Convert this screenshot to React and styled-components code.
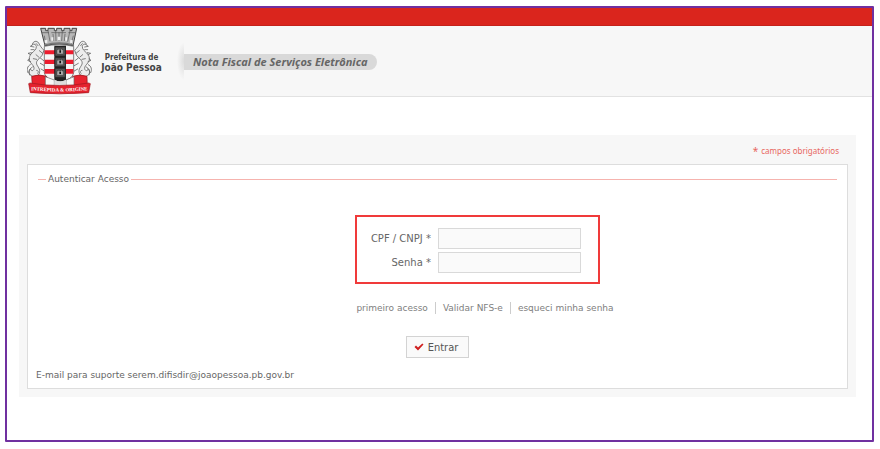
import styled, { createGlobalStyle } from 'styled-components';

const GlobalStyle = createGlobalStyle`
  * {
    box-sizing: border-box;
  }

  body {
    margin: 0;
    background: #fff;
    font-family: 'DejaVu Sans', Verdana, sans-serif;
    font-size: 9px;
    line-height: 12px;
    color: #666;
  }
`;

const Page = styled.div`
  min-height: calc(100vh - 13px);
  margin: 6px 6px 7px 5px;
  border: 2px solid #7030a0;
  border-radius: 1px;
`;

const TopBar = styled.div`
  height: 18px;
  background: #da251d;
  border-bottom: 1px solid #c4221b;
`;

const Header = styled.header`
  display: flex;
  align-items: center;
  height: 71px;
  padding-left: 20px;
  background: #f7f7f7;
  border-bottom: 1px solid #e2e2e2;
`;

const CityName = styled.div`
  width: 63px;
  margin-left: 7px;
  padding-top: 6px;
  font-family: 'DejaVu Sans Condensed', 'DejaVu Sans', sans-serif;
  font-weight: 700;
  font-size: 10px;
  line-height: 12px;
  text-align: center;
  white-space: nowrap;
  color: #444;
`;

const CityPrefix = styled.span`
  display: block;
  font-size: 8px;
  line-height: 8px;
`;

const TitleWrap = styled.div`
  display: flex;
  align-items: center;
  height: 38px;
  margin-left: 14px;
  padding: 2px 0 0 7px;
  background: radial-gradient(ellipse 7px 19px at 7px 50%, #dcdcdc, #f7f7f7) no-repeat 0 0 / 7px 38px;
`;

const Title = styled.h1`
  margin: 0;
  padding: 0 10px 0 9px;
  border-radius: 0 8px 8px 0;
  background: #d9d9d9;
  font-family: 'Noto Sans', sans-serif;
  font-style: italic;
  font-weight: 700;
  font-size: 11px;
  line-height: 16px;
  color: #666;
`;

const Panel = styled.main`
  margin: 38px 16px 43px 12px;
  padding: 9px 8px 8px;
  background: #f7f7f7;
`;

const Required = styled.p`
  display: flex;
  justify-content: flex-end;
  gap: 3px;
  margin: 0;
  padding: 1px 9px 7px 0;
  font-family: 'Noto Sans', sans-serif;
  font-size: 8px;
  color: #e8675f;
`;

const Star = styled.span`
  font-size: 10px;
`;

const Card = styled.div`
  padding: 8px 10px 7px 8px;
  border: 1px solid #ddd;
  background: #fff;
`;

const Fieldset = styled.fieldset`
  min-width: 0;
  margin: 0 0 0 2px;
  padding: 30px 0 11px;
  border: none;
  border-top: 1px solid #f6b3ae;
`;

const Legend = styled.legend`
  margin-left: 8px;
  padding: 0 2px;
`;

const Fields = styled.div`
  display: grid;
  grid-template-columns: 1fr 143px;
  align-items: center;
  gap: 3px 7px;
  width: 245px;
  padding: 11px 17px 9px 11px;
  border: 2px solid #f03a3a;
`;

const Row = styled.div`
  display: flex;
  justify-content: center;
  padding-left: ${({ $shift }) => $shift || 0}px;
  margin-bottom: ${({ $gap }) => $gap || 0}px;
`;

const Label = styled.label`
  font-size: 10px;
  text-align: right;
  white-space: nowrap;
`;

const Input = styled.input`
  width: 100%;
  height: 21px;
  padding: 0 4px;
  border: 1px solid #d9d9d9;
  background: #fafafa;
  font: inherit;
  color: inherit;
`;

const Link = styled.a`
  padding: 0 7px;
  color: #808080;
  text-decoration: none;

  & + & {
    border-left: 1px solid #ccc;
  }
`;

const Button = styled.button`
  display: flex;
  align-items: center;
  gap: 4px;
  height: 22px;
  padding: 0 10px 0 7px;
  border: 1px solid #d3d3d3;
  background: #fafafa;
  font-family: 'DejaVu Sans Condensed', 'DejaVu Sans', sans-serif;
  font-size: 11px;
  color: #555;
`;

const Support = styled.p`
  margin: 0;
`;

const Tower = ({ y }) => (
  <g>
    <path d={`M105 ${y}h31v27h-31z`} fill="#555" stroke="#222" strokeWidth="2" />
    <path d={`M111 ${y + 21}v-13h4v-3h3v3h5v-3h3v3h4v13z`} fill="#aaa" stroke="#222" strokeWidth="1" />
    <path d={`M118 ${y + 10}h5v7h-5z`} fill="#111" />
  </g>
);

const Supporter = () => (
  <g fill="none" stroke="#666" strokeWidth="2.5" strokeLinecap="round">
    <path
      d="M71 83C65 77 60 70 56 62c-6-9-17-5-19 4 6-2 12 1 12 7 0 9-7 13-13 19-9 8-11 20-4 29 5 7 11 11 10 18-1 8-11 8-10 0-10 8-4 22 10 24 11 1 18-8 17-19-2-11-12-16-9-26 3-9 17-14 19-25z"
      fill="#ececec"
    />
    <path d="M38 67l-7 5 11 2M49 64l5 6M42 82l-9 0M34 91l-10 2 8 4M29 109l-6 5 9 4M58 85l10 8M48 97l8 7M40 109l10 2" />
    <path d="M24 151c-5-9-2-20 7-24M29 158c-5-10 0-20 8-24M50 144c5 0 7 5 3 9M61 107l10 8M61 123l12 7M63 140l10 6" />
  </g>
);

const Crest = () => (
  <svg width="66" height="68" viewBox="21 14 198 204" role="img" aria-label="Brasão de João Pessoa">
    <path d="M62 18h15v7h7v-7h19v7h7v-7h15v7h7v-7h18v7h6v-7h14l-11 52q-42-11-84 0z" fill="#b8b8b8" stroke="#444" strokeWidth="3" />
    <path
      d="M66 31h21M94 31h44M145 31h21M84 25l6 32M107 25l1 31M127 25l-2 31M150 25l-7 33M73 40l4 24M99 35l2 21M117 30v26M135 35l-2 21M160 40l-6 24"
      fill="none"
      stroke="#555"
      strokeWidth="2"
    />
    <path d="M74 54l8-2v9l-7 2zM94 45h6v10h-6zM113 43h8v11h-8zM136 45h5v10h-5zM151 52l7 2-1 9-7-2z" fill="#eee" />
    <path d="M72 69q46-14 90 0" fill="none" stroke="#777" strokeWidth="4" />
    <Supporter />
    <g transform="translate(236 0) scale(-1 1)">
      <Supporter />
    </g>
    <path d="M73 72q45-10 88 0v80q-3 20-44 27-41-7-44-27z" fill="#f5f5f5" stroke="#444" strokeWidth="2" />
    <path d="M74 84h86v12H74zM74 112h86v13H74zM74 140h86v14H74z" fill="#ed1c2e" />
    <path d="M103 70h35v102q-17 9-35 0z" fill="#222" />
    <Tower y={74} />
    <Tower y={106} />
    <Tower y={138} />
    <path d="M35 162q22-8 45 0l-1 29-42 2zM158 162q22-8 43 0l1 31-43-2z" fill="#e8232e" stroke="#8b151b" strokeWidth="2" />
    <path d="M76 163l27 10v17H76zM138 173l24-10v27h-24z" fill="#f7f7f7" stroke="#666" strokeWidth="2" />
    <path d="M103 172q17 9 35 0v18h-35z" fill="#ddd" />
    <path d="M30 182q88 15 176 0l5 2-5 27q-87 7-175 0l-5-27z" fill="#e4222e" stroke="#9f1820" strokeWidth="2" />
    <path id="motto" d="M28 203q90 9 180 0" fill="none" />
    <text fill="#fff" fontFamily="Liberation Serif, serif" fontWeight="700" fontSize="15" textAnchor="middle">
      <textPath href="#motto" startOffset="50%">
        INTREPIDA &amp; ORIGINE
      </textPath>
    </text>
  </svg>
);

const Check = () => (
  <svg width="10" height="8" viewBox="0 0 10 8" aria-hidden="true">
    <path d="M0.5 4L2 2.6 4 4.4 8.3 0.4 9.5 1.6 4 7.6z" fill="#cf1f1f" />
  </svg>
);

const App = () => {
  return (
    <>
      <GlobalStyle />
      <Page>
        <TopBar />
        <Header>
          <Crest />
          <CityName>
            <CityPrefix>Prefeitura de</CityPrefix>
            João Pessoa
          </CityName>
          <TitleWrap>
            <Title>Nota Fiscal de Serviços Eletrônica</Title>
          </TitleWrap>
        </Header>
        <Panel>
          <Required>
            <Star>*</Star> campos obrigatórios
          </Required>
          <Card as="form" onSubmit={(e) => e.preventDefault()}>
            <Fieldset>
              <Legend>Autenticar Acesso</Legend>
              <Row $shift={80} $gap={18}>
                <Fields>
                  <Label htmlFor="documento">CPF / CNPJ *</Label>
                  <Input id="documento" type="text" />
                  <Label htmlFor="senha">Senha *</Label>
                  <Input id="senha" type="password" />
                </Fields>
              </Row>
              <Row as="nav" $shift={95} $gap={22}>
                <Link href="#primeiro-acesso">primeiro acesso</Link>
                <Link href="#validar">Validar NFS-e</Link>
                <Link href="#esqueci">esqueci minha senha</Link>
              </Row>
              <Row>
                <Button type="submit">
                  <Check />
                  Entrar
                </Button>
              </Row>
            </Fieldset>
            <Support>E-mail para suporte serem.difisdir@joaopessoa.pb.gov.br</Support>
          </Card>
        </Panel>
      </Page>
    </>
  );
};

export default App;
